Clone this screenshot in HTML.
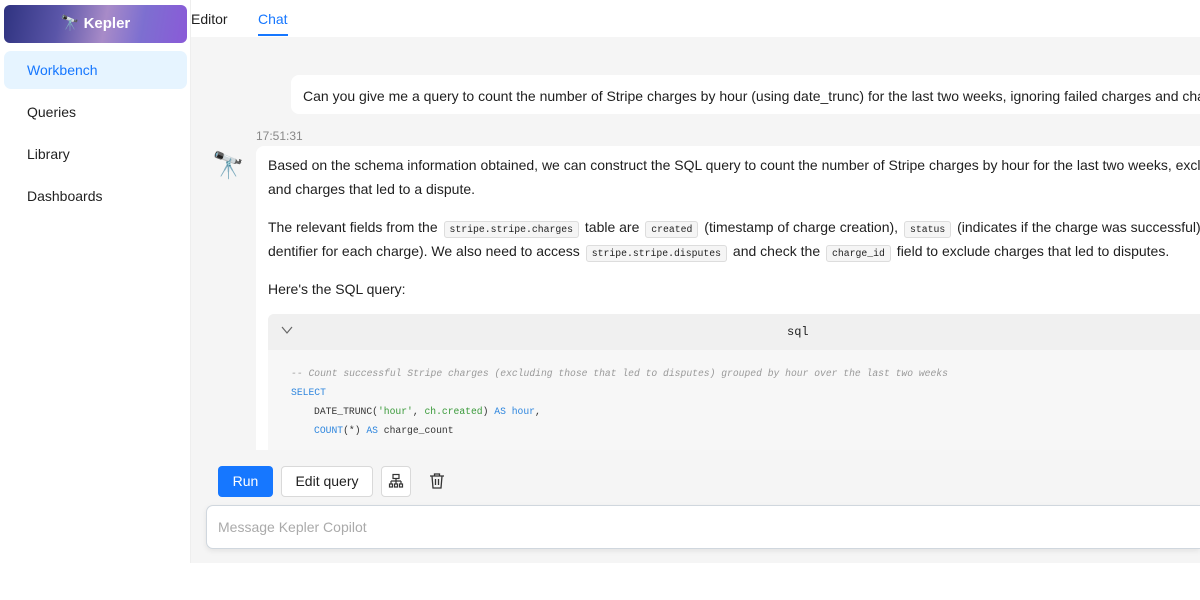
<!DOCTYPE html>
<html><head><style>
*{margin:0;padding:0;box-sizing:border-box}
html,body{overflow:hidden}
body{width:1200px;height:600px;background:#fff;font-family:"Liberation Sans",sans-serif;color:#1f1f1f;position:relative;font-size:14px}
.abs{position:absolute;white-space:nowrap}
.logo{left:4px;top:5px;width:183px;height:38px;border-radius:6px;background:linear-gradient(100deg,#2f3380 0%,#5a55a8 30%,#a88bc8 55%,#7d6fd0 75%,#8a5ad8 100%);color:#fff;font-weight:bold;font-size:15px;text-align:center;line-height:38px}
.nav{left:27px;font-size:14px}
.main{left:191px;top:37px;width:1009px;height:526px;background:#f5f5f5}
code{font-family:"Liberation Mono",monospace;font-size:9.8px;background:#f5f5f5;border:1px solid #ddd;border-radius:3px;padding:2px 5px;margin:0 2px}
.code{font-family:"Liberation Mono",monospace;font-size:9.7px;color:#333}
.c{color:#999;font-style:italic}.k{color:#2e86de}.s{color:#3a9a3a}
</style></head><body>
<div class="abs logo">🔭 Kepler</div>
<div class="abs" style="left:4px;top:51px;width:183px;height:38px;border-radius:7px;background:#e6f4ff"></div>
<div class="abs nav" style="top:62px;color:#1677ff">Workbench</div>
<div class="abs nav" style="top:104px">Queries</div>
<div class="abs nav" style="top:146px">Library</div>
<div class="abs nav" style="top:188px">Dashboards</div>
<div class="abs" style="left:190px;top:0;width:1px;height:563px;background:#eee"></div>
<div class="abs" style="left:191px;top:11px;font-size:14px">Editor</div>
<div class="abs" style="left:258px;top:11px;font-size:14px;color:#1677ff">Chat</div>
<div class="abs" style="left:258px;top:34px;width:30px;height:2px;background:#1677ff"></div>
<div class="abs main"></div>
<div class="abs" style="left:291px;top:75px;width:909px;height:39px;background:#fff;border-radius:8px 0 0 8px;overflow:hidden;padding:13px 12px">Can you give me a query to count the number of Stripe charges by hour (using date_trunc) for the last two weeks, ignoring failed charges and charges that led to a dispute.</div>
<div class="abs" style="left:256px;top:129px;font-size:12px;color:#888">17:51:31</div>
<div class="abs" style="left:212px;top:150px;font-size:26px">🔭</div>
<div class="abs" style="left:256px;top:146px;width:944px;height:310px;background:#fff;border-radius:8px 0 0 0;overflow:hidden">
<div class="abs" style="left:12px;top:11px">Based on the schema information obtained, we can construct the SQL query to count the number of Stripe charges by hour for the last two weeks, excluding failed charges</div>
<div class="abs" style="left:12px;top:35px">and charges that led to a dispute.</div>
<div class="abs" style="left:12px;top:73px">The relevant fields from the <code>stripe.stripe.charges</code> table are <code>created</code> (timestamp of charge creation), <code>status</code> (indicates if the charge was successful), and <code>id</code> (unique i</div>
<div class="abs" style="left:12px;top:97px">dentifier for each charge). We also need to access <code>stripe.stripe.disputes</code> and check the <code>charge_id</code> field to exclude charges that led to disputes.</div>
<div class="abs" style="left:12px;top:135px">Here's the SQL query:</div>
<div class="abs" style="left:12px;top:168px;width:940px;height:136px;background:#f7f7f7;border-radius:6px 6px 0 0"></div>
<div class="abs" style="left:12px;top:168px;width:940px;height:36px;background:#f0f0f0;border-radius:6px 6px 0 0"></div>
<svg class="abs" style="left:25px;top:180px" width="12" height="8" viewBox="0 0 12 8" fill="none" stroke="#666" stroke-width="1.2"><path d="M1 1l5 6 5-6"/></svg>
<div class="abs code" style="left:531px;top:179px;font-size:12px;color:#222">sql</div>
<div class="abs code" style="left:35px;top:222px"><span class="c">-- Count successful Stripe charges (excluding those that led to disputes) grouped by hour over the last two weeks</span></div>
<div class="abs code k" style="left:35px;top:241px">SELECT</div>
<div class="abs code" style="left:58px;top:260px">DATE_TRUNC(<span class="s">'hour'</span>, <span class="s">ch.created</span>) <span class="k">AS hour</span>,</div>
<div class="abs code" style="left:58px;top:279px"><span class="k">COUNT</span>(*) <span class="k">AS</span> charge_count</div>
</div>
<div class="abs" style="left:191px;top:450px;width:1009px;height:113px;background:#f5f5f5"></div>
<div class="abs" style="left:218px;top:466px;width:55px;height:31px;background:#1677ff;border-radius:4px;color:#fff;text-align:center;line-height:31px">Run</div>
<div class="abs" style="left:281px;top:466px;width:92px;height:31px;background:#fff;border:1px solid #d9d9d9;border-radius:4px;text-align:center;line-height:29px">Edit query</div>
<div class="abs" style="left:381px;top:466px;width:30px;height:31px;background:#fff;border:1px solid #d9d9d9;border-radius:4px"></div>
<svg class="abs" style="left:388px;top:473px" width="16" height="16" viewBox="0 0 16 16" fill="none" stroke="#333" stroke-width="1.2"><rect x="5" y="1.5" width="6" height="4"/><path d="M8 5.5V8M3 8h10M3 8v3M8 8v3M13 8v3"/><rect x="1.5" y="11" width="3" height="3"/><rect x="6.5" y="11" width="3" height="3"/><rect x="11.5" y="11" width="3" height="3"/></svg>
<svg class="abs" style="left:428px;top:472px" width="18" height="18" viewBox="0 0 18 18" fill="none" stroke="#333" stroke-width="1.3"><path d="M2 4h14M6.5 4V2h5v2M4 4l1 12h8l1-12M7.5 7v6M10.5 7v6"/></svg>
<div class="abs" style="left:206px;top:505px;width:994px;height:44px;background:#fff;border:1px solid #d0d7de;border-right:none;border-radius:7px 0 0 7px;box-shadow:0 2px 6px rgba(0,0,0,.08)"></div>
<div class="abs" style="left:218px;top:519px;color:#aaa">Message Kepler Copilot</div>
</body></html>
